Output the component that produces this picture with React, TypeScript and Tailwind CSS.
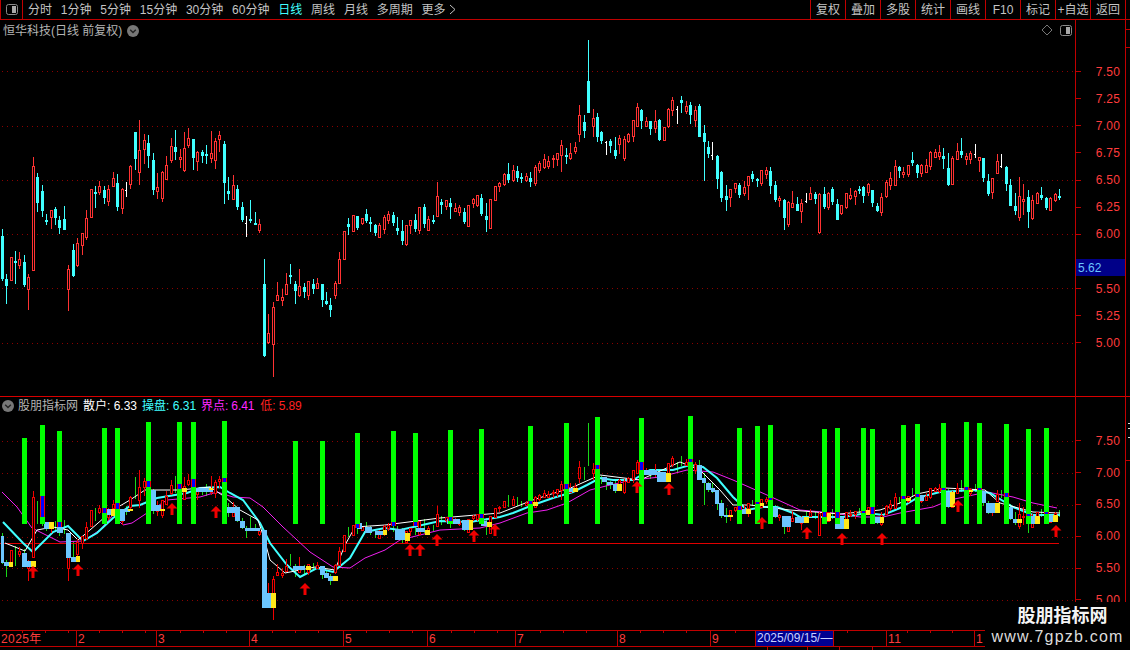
import React from "react";

type Candle = [number, "c" | "r" | "w", number, number, number, number];

const RED = "#ff3232";
const CYAN = "#40ffff";
const SKY = "#6cc6ff";
const YEL = "#ffe81a";
const font = "font-['Liberation_Sans','Noto_Sans_CJK_SC',sans-serif]";

// x, kind, body top, body bottom, high, low (page pixels of the upper pane)
const candles: Candle[] = [
  [2.5,"c",236,279,229,281],[6.5,"c",279,286,274,304],[11.5,"r",257,280,257,281],[15.5,"c",261,263,251,284],
  [19.5,"r",259,265,252,269],[24.5,"c",262,285,255,287],[28.5,"r",277,289,274,310],[33.5,"r",166,270,157,270],
  [37.5,"c",177,203,173,212],[42.5,"c",191,211,185,217],[46.5,"c",220,221,214,225],[51.5,"r",210,217,210,229],
  [55.5,"c",209,218,207,225],[59.5,"c",220,228,216,234],[64.5,"c",219,230,206,230],[68.5,"r",269,289,265,311],
  [73.5,"c",250,276,244,277],[77.5,"r",243,265,238,267],[82.5,"r",233,245,233,255],[86.5,"r",218,237,210,240],
  [91,"r",189,217,189,218],[95,"c",192,193,186,208],[99,"r",186,192,181,195],[104,"c",190,198,186,204],
  [108.5,"r",189,201,185,206],[113.5,"r",178,186,172,187],[117.5,"c",183,207,174,211],[122.5,"r",189,208,188,214],
  [126.5,"w",190,190,182,197],[130.5,"r",166,184,165,189],[135,"c",132,159,132,170],[139,"r",150,172,120,185],
  [144,"r",140,149,134,164],[148.5,"c",143,156,135,168],[153,"c",160,190,153,195],[157.5,"r",187,191,173,199],
  [162.5,"r",172,198,171,202],[166.5,"r",165,179,156,179],[171.5,"r",146,160,138,163],[175.5,"c",147,152,130,160],
  [180,"r",157,159,149,168],[184.5,"r",148,170,132,172],[188.5,"r",138,145,128,148],[193,"c",139,158,139,170],
  [197.5,"r",152,161,151,171],[202,"c",152,156,150,163],[206.5,"c",154,155,145,164],[211,"r",153,158,131,163],
  [215.5,"r",141,160,138,169],[219.5,"r",135,139,131,152],[224.5,"c",144,183,141,204],[228.5,"c",191,194,177,200],
  [233,"r",185,199,175,200],[237.5,"c",189,207,185,210],[242,"c",207,220,202,222],[246.5,"w",223,223,216,237],
  [250.5,"c",219,220,200,223],[255.5,"c",223,224,212,225],[259.5,"r",224,230,219,233],
  [264.5,"c",284,356,259,357],[268.5,"r",333,342,314,344],[273.5,"r",307,344,302,377],[277.5,"r",295,300,282,300],
  [282.5,"r",297,300,289,306],[286.5,"r",284,294,273,294],[290.5,"c",275,277,264,284],[295.5,"c",284,291,281,304],
  [299.5,"r",286,295,269,297],[304.5,"c",287,292,283,298],[308.5,"r",281,295,281,300],[313.5,"c",284,289,279,294],
  [317.5,"r",283,288,278,288],[322.5,"c",284,300,284,307],[326.5,"c",301,304,292,305],[330.5,"c",305,310,298,317],
  [335.5,"r",283,295,281,299],[339.5,"r",259,283,252,283],[344.5,"r",231,259,231,259],[348.5,"c",224,227,218,235],
  [353.5,"r",215,231,215,231],[357.5,"c",216,228,216,230],[362.5,"r",218,223,218,225],[366.5,"c",214,221,209,223],
  [370.5,"c",222,224,217,232],[375.5,"c",225,233,224,236],[379.5,"r",225,237,223,237],[384.5,"r",217,229,215,234],
  [388.5,"r",214,220,211,224],[393.5,"c",215,223,212,226],[397.5,"c",228,231,217,235],[402.5,"c",231,241,220,245],
  [406.5,"r",225,244,225,246],[410.5,"r",220,225,220,234],[415.5,"c",220,229,214,232],[419.5,"r",207,230,207,234],
  [424.5,"c",207,224,204,228],[428.5,"r",219,230,216,230],[433.5,"c",220,222,215,224],[437.5,"r",196,216,182,216],
  [441.5,"c",202,205,199,214],[446.5,"r",200,206,200,210],[450.5,"c",203,207,198,219],[455.5,"r",208,211,203,211],
  [459.5,"r",207,212,205,216],[464.5,"c",212,222,208,224],[468.5,"r",205,226,205,226],[473.5,"r",199,203,198,208],
  [477.5,"r",195,205,195,207],[481.5,"c",198,214,194,216],[486.5,"c",216,220,203,232],[490.5,"r",199,228,199,228],
  [495.5,"r",186,200,186,200],[499.5,"r",183,186,182,192],[504.5,"r",174,184,173,186],[508.5,"c",174,180,163,183],
  [513.5,"r",170,180,165,182],[517.5,"c",171,178,166,182],[521.5,"c",177,178,173,183],[526.5,"r",176,180,173,182],
  [530.5,"c",178,182,172,187],[535.5,"r",167,183,165,186],[539.5,"r",163,170,161,173],[544.5,"r",159,167,154,169],
  [548.5,"r",161,166,156,169],[553.5,"r",158,159,155,168],[557.5,"r",153,159,153,166],[561.5,"r",145,155,140,172],
  [566.5,"c",155,157,148,164],[570.5,"r",153,158,143,160],[575.5,"r",147,151,142,154],[579.5,"r",115,134,105,142],
  [584.5,"c",122,131,115,138],[588.5,"c",81,113,40,113],[593.5,"r",118,126,109,137],[597.5,"c",117,137,113,142],
  [601.5,"c",132,141,131,144],[606.5,"w",142,142,141,155],[610.5,"c",141,146,139,153],[615.5,"c",150,156,137,159],
  [619.5,"r",138,144,135,154],[624.5,"r",139,158,136,161],[628.5,"r",134,141,133,143],[633.5,"r",120,136,120,142],
  [637.5,"r",107,126,103,126],[641.5,"c",110,121,109,129],[646.5,"r",121,126,117,126],[650.5,"c",121,129,121,135],
  [655.5,"r",121,128,110,133],[659.5,"c",120,140,119,141],[664.5,"r",127,140,127,140],[668.5,"r",109,126,108,128],
  [672.5,"r",100,110,97,116],[677.5,"w",109,109,106,124],[681.5,"c",100,103,96,113],[686.5,"r",106,111,101,114],
  [690.5,"c",105,115,102,124],[695.5,"r",110,120,106,127],[699.5,"c",106,137,104,137],[704.5,"c",133,142,125,181],
  [708.5,"c",147,154,141,158],[712.5,"w",155,155,142,160],[717.5,"c",156,179,155,189],[721.5,"c",172,198,171,202],
  [726.5,"c",196,200,185,211],[730.5,"r",189,197,189,207],[735.5,"r",183,188,183,193],[739.5,"c",185,195,183,198],
  [744.5,"r",187,193,181,196],[748.5,"r",176,185,176,200],[752.5,"c",174,179,171,182],[757.5,"c",179,181,178,187],
  [761.5,"r",170,183,170,186],[766.5,"r",170,174,167,179],[770.5,"c",171,186,167,194],[775.5,"c",185,200,181,202],
  [779.5,"r",198,200,196,207],[784.5,"c",200,218,199,230],[788.5,"r",202,224,201,227],[792.5,"r",203,207,191,208],
  [797.5,"c",204,211,197,211],[801.5,"r",203,211,199,223],[806.5,"w",201,201,193,203],[810.5,"r",193,199,187,200],
  [815.5,"c",194,199,192,204],[819.5,"r",194,232,193,234],[824.5,"c",194,207,187,209],[828.5,"r",193,207,192,210],
  [832.5,"c",189,202,187,205],[837.5,"c",204,220,199,220],[841.5,"r",205,213,205,215],[846.5,"r",193,207,193,209],
  [850.5,"r",195,198,188,200],[855.5,"r",191,196,190,205],[859.5,"c",189,191,186,194],[863.5,"c",187,196,186,203],
  [868.5,"r",184,192,183,196],[872.5,"c",190,203,190,207],[877.5,"c",206,211,203,212],[881.5,"r",197,212,193,216],
  [886.5,"r",182,196,180,198],[890.5,"r",178,185,172,190],[895.5,"r",166,185,160,185],[899.5,"c",167,171,166,178],
  [903.5,"r",172,174,167,178],[908.5,"r",165,174,165,177],[912.5,"c",160,163,152,166],[917.5,"c",165,173,164,178],
  [921.5,"r",165,173,164,177],[926.5,"r",165,172,159,172],[930.5,"r",152,166,151,170],[935.5,"r",152,157,149,158],
  [939.5,"r",152,156,145,160],[943.5,"c",156,159,148,169],[948.5,"c",168,185,153,186],[952.5,"r",158,184,156,184],
  [957.5,"r",151,159,143,159],[961.5,"c",151,155,138,158],[966.5,"r",156,159,153,165],[970.5,"r",153,159,151,164],
  [975.5,"w",154,154,144,158],[979.5,"r",157,160,157,172],[983.5,"c",158,178,158,182],[988.5,"c",181,194,174,196],
  [992.5,"r",178,192,178,199],[997.5,"r",161,173,154,173],[1001.5,"w",166,166,154,168],[1006.5,"c",167,184,166,191],
  [1010.5,"c",185,206,179,206],[1015.5,"c",206,211,193,215],[1019.5,"r",196,217,177,221],[1023.5,"r",199,201,184,215],
  [1028.5,"c",197,212,190,228],[1032.5,"r",200,218,195,220],[1037.5,"r",193,203,192,203],[1041.5,"c",195,198,187,200],
  [1046.5,"c",198,208,197,210],[1050.5,"r",198,210,197,211],[1055.5,"r",194,200,193,202],[1059.5,"c",196,198,189,200],
];

// same candles on the lower pane's price scale
const low = (y: number) => 441.5 + (y - 71.5) * 0.5838;

const bars: [number, number][] = [
  [22,438],[40,425],[57,431],[102,428],[115,428],[146,422],[177,422],[191,422],[222,421],[293,441],[320,441],
  [355,433],[391,431],[413,433],[448,430],[479,429],[528,426],[564,423],[595,417],[639,418],[688,416],[737,428],
  [755,426],[768,425],[822,429],[835,428],[861,428],[870,429],[901,425],[915,424],[941,423],[964,422],[977,423],
  [1004,424],[1026,429],[1044,428],
];

const blues: [number, number, number][] = [
  [40,496,517],[57,522,527],[102,508,513],[115,503,509],[146,481,487],[177,484,489],[191,479,487],[222,478,482],
  [355,524,528],[391,522,526],[413,522,526],[448,517,521],[479,514,518],[528,501,504],[564,484,489],[595,465,469],
  [639,462,470],[688,459,462],[737,506,510],[755,502,504],[768,498,500],[822,512,517],[835,512,518],[861,511,513],
  [870,507,514],[901,496,499],[915,494,497],[941,488,490],[964,487,490],[977,488,490],[1004,493,497],[1026,514,516],
  [1044,512,514],
];

const skyBlocks: [number, number, number, number][] = [
  [1,4,536,563],[4,10,562,566],[22,27,553,567],[27,32,561,567],[44,50,522,529],[57,63,527,533],[66,71,533,558],
  [71,76,557,562],[107,113,509,515],[116,125,509,521],[125,130,509,512],[151,156,490,511],[156,161,505,511],
  [196,213,488,492],[227,240,507,513],[235,240,507,521],[240,245,521,528],[245,260,528,531],[262,267,530,608],
  [267,272,593,608],[293,305,566,570],[320,325,566,575],[324,329,573,578],[328,333,576,581],[357,362,523,529],
  [365,372,527,533],[375,383,531,535],[395,405,529,540],[416,425,528,532],[447,460,519,524],[462,470,520,530],
  [481,487,521,526],[569,573,488,492],[602,607,477,482],[607,613,482,485],[613,617,484,491],[644,657,470,475],
  [657,666,472,482],[697,702,465,480],[702,706,478,483],[706,711,483,490],[711,715,488,492],[715,719,490,504],
  [719,724,503,516],[724,728,515,517],[742,746,509,514],[773,778,507,517],[782,791,516,527],[795,804,517,523],
  [835,844,517,529],[875,880,517,523],[920,924,495,501],[946,950,492,507],[982,986,491,503],[986,995,503,513],
  [1009,1013,507,519],[1013,1017,519,523],[1031,1035,516,524],[1049,1053,515,522],
];

const yellowBlocks: [number, number, number, number][] = [
  [9,13,562,567],[31,36,561,567],[49,54,522,529],[76,80,556,562],[111,116,509,516],[128,133,509,511],[160,165,509,511],
  [182,187,488,492],[209,213,488,490],[271,276,593,608],[306,311,566,570],[333,338,576,581],[383,387,530,535],
  [405,410,533,541],[425,430,530,535],[469,473,520,530],[487,492,522,527],[533,538,502,506],[573,578,488,492],
  [617,622,484,491],[666,671,473,482],[728,733,515,517],[746,751,509,514],[760,764,503,506],[804,809,517,523],
  [827,831,513,521],[844,849,519,529],[866,870,510,515],[880,884,517,523],[906,911,498,501],[950,955,492,507],
  [969,973,490,492],[995,1000,503,513],[1017,1022,519,523],[1035,1040,516,524],[1053,1058,515,522],
];

const arrows: [number, number][] = [
  [33,566],[78,564],[172,503],[216,506],[305,583],[410,544],[420,544],[437,534],[474,530],[495,524],[637,481],
  [669,483],[762,517],[807,527],[842,533],[882,533],[958,500],[1056,525],
];

// week marks along the top of the date axis
const dateTicks = [22, 45, 68, 99, 122, 145, 180, 203, 226, 272, 295, 318, 366, 389, 412, 451, 474, 497, 540, 563, 586, 640, 663, 686, 735, 847, 907, 930, 952, 1000];

const cyanLine = "3,522 23,543 33,552 37,548 53,532 68,526 83,541 97,533 113,518 130,506 140,505 157,498 187,493 200,488 220,487 230,493 243,500 260,523 270,543 287,565 300,577 317,568 333,572 350,558 365,532 385,528 400,530 440,521 470,522 500,517 513,513 533,505 553,498 573,492 587,485 600,478 613,480 633,480 650,470 673,470 690,465 703,467 717,478 733,497 747,510 763,507 777,507 793,513 800,517 843,517 867,513 883,515 900,508 917,498 940,492 973,490 990,493 1013,507 1033,515 1060,515";
const magentaLine = "2,492 17,507 32,528 60,542 83,541 100,530 113,515 123,525 132,523 147,513 167,500 200,497 217,492 233,497 250,498 263,507 283,527 310,552 333,567 350,568 365,558 385,550 400,540 440,530 480,528 500,523 527,513 547,510 567,503 590,490 610,485 633,480 660,477 687,470 713,472 733,480 767,495 800,510 833,513 860,517 883,517 900,513 933,507 950,500 987,492 1013,497 1033,503 1057,508";
const whiteLine = "5,543 25,551 37,530 53,527 68,530 78,540 90,530 113,510 130,500 145,490 180,490 210,487 225,497 240,510 258,520 264,538 270,560 285,573 300,570 315,567 335,570 345,545 355,527 385,525 440,518 500,513 533,500 573,487 600,475 640,480 680,462 700,470 720,490 733,505 750,505 790,510 840,514 880,510 900,503 917,494 945,488 985,490 1000,503 1033,512 1060,513";

function CandleMark({ c, y, wick, up }: { c: Candle; y: (v: number) => number; wick: string; up: string }) {
  const [x, kind, top, bot, hi, lo] = c;
  const bx = Math.round(x - 1.5);
  const t = Math.round(y(top));
  const b = Math.round(y(bot));
  const h = Math.round(y(hi));
  const l = Math.round(y(lo));
  if (kind === "r") {
    return (
      <g fill={up}>
        <rect x={bx + 1} y={h} width={1} height={Math.max(l - h, 1)} />
        <rect x={bx + 0.5} y={t + 0.5} width={2} height={Math.max(b - t, 1)} fill="#000" stroke={up} />
      </g>
    );
  }
  return (
    <g fill={kind === "w" ? "#fff" : wick}>
      <rect x={bx + 1} y={h} width={1} height={Math.max(l - h, 1)} />
      {kind === "w" ? <rect x={bx} y={t} width={1} height={1} /> : <rect x={bx} y={t} width={3} height={Math.max(b - t, 2)} />}
    </g>
  );
}

function UpArrow({ x, y }: { x: number; y: number }) {
  return <path d={`M${x} ${y}L${x + 5.5} ${y + 5.5}H${x + 1.5}V${y + 12}H${x - 1.5}V${y + 5.5}H${x - 5.5}Z`} fill="#f00000" />;
}

function Toggle() {
  return (
    <svg width="12" height="11" viewBox="0 0 12 11">
      <rect x="0.5" y="0.5" width="11" height="10" rx="2" fill="none" stroke="#8a8a8a" />
      <rect x="6" y="2" width="4" height="7" fill="#a8a8a8" />
    </svg>
  );
}

function Chevron() {
  return (
    <svg width="12" height="12" viewBox="0 0 12 12">
      <circle cx="6" cy="6" r="6" fill="#777" />
      <path d="M3.2 4.8L6 7.6L8.8 4.8" fill="none" stroke="#222" strokeWidth="1.4" />
    </svg>
  );
}

function Grid({ ys }: { ys: number[] }) {
  return (
    <>
      {ys.map((y) => (
        <line key={y} x1="2" x2="1075" y1={y + 0.5} y2={y + 0.5} stroke="#8c0000" strokeDasharray="1 4" />
      ))}
    </>
  );
}

function UpperChart() {
  return (
    <svg className="block" width="1075" height="376" viewBox="0 20 1075 376" shapeRendering="crispEdges">
      <Grid ys={[71, 126, 180, 234, 288, 343]} />
      {candles.map((c) => (
        <CandleMark key={c[0]} c={c} y={(v) => v} wick={CYAN} up={RED} />
      ))}
    </svg>
  );
}

function LowerChart() {
  const red = candles.filter((c) => c[1] === "r");
  const rest = candles.filter((c) => c[1] !== "r");
  return (
    <svg className="block" width="1075" height="233" viewBox="0 397 1075 233">
      <g shapeRendering="crispEdges">
        <Grid ys={[441, 473, 505, 537, 568, 600]} />
        {rest.map((c) => (
          <rect key={c[0]} x={Math.round(c[0] - 0.5)} y={low(c[4])} width={1} height={low(c[5]) - low(c[4])} fill="#18d818" />
        ))}
      </g>
      <line x1="0" x2="1059" y1="543.5" y2="543.5" stroke="#e00000" />
      <polyline points={magentaLine} fill="none" stroke="#f020f0" strokeWidth="1" />
      <polyline points={cyanLine} fill="none" stroke={CYAN} strokeWidth="2" />
      <polyline points={whiteLine} fill="none" stroke="#fff" strokeWidth="1" />
      <g shapeRendering="crispEdges">
        {red.map((c) => (
          <CandleMark key={c[0]} c={c} y={low} wick={RED} up="#f00000" />
        ))}
        {skyBlocks.map(([a, b, t, u]) => (
          <rect key={`${a}-${t}`} x={a} y={t} width={b - a} height={u - t} fill={SKY} />
        ))}
        {yellowBlocks.map(([a, b, t, u]) => (
          <rect key={`${a}-${t}`} x={a} y={t} width={b - a} height={u - t} fill={YEL} />
        ))}
        {bars.map(([x, top]) => (
          <rect key={x} x={x} y={top} width={5} height={524 - top} fill="#00ff00" />
        ))}
        {blues.map(([x, t, u]) => (
          <g key={x}>
            <rect x={x} y={t} width={5} height={u - t} fill="#f00000" />
            <rect x={x + 1} y={t} width={3} height={u - t} fill="#0000ff" />
          </g>
        ))}
      </g>
      {arrows.map(([x, y]) => (
        <UpArrow key={x} x={x} y={y} />
      ))}
    </svg>
  );
}

function AxisRow({ label, h }: { label: string; h: string }) {
  return (
    <div className={`flex items-center ${h}`}>
      <span className="h-px w-[5px] bg-[#c00000]" />
      {label && <span className="ml-auto mr-[5px] text-[12px] leading-none tracking-[0.2px] text-[#ff3c3c]">{label}</span>}
    </div>
  );
}

const periods = ["分时", "1分钟", "5分钟", "15分钟", "30分钟", "60分钟", "日线", "周线", "月线", "多周期"];
const tools = ["复权", "叠加", "多股", "统计", "画线", "F10", "标记", "+自选", "返回"];
const months: [string, string][] = [
  ["2025年", "w-[76px]"], ["2", "w-[80px]"], ["3", "w-[93px]"], ["4", "w-[94px]"], ["5", "w-[84px]"], ["6", "w-[88px]"],
  ["7", "w-[102px]"], ["8", "w-[93px]"], ["9", "w-[176px]"], ["11", "w-[88px]"], ["1", "flex-1"],
];

export default function App() {
  return (
    <div className={`relative flex h-[650px] w-[1130px] flex-col overflow-hidden bg-black ${font}`}>
      {/* toolbar */}
      <div className="flex h-[20px] shrink-0 items-center border-b border-[#c00000] text-[12px] text-[#c4c4c4]">
        <div className="flex h-full w-[23px] items-center justify-center border-x border-[#c00000]">
          <Toggle />
        </div>
        <div className="ml-[5px] flex items-center gap-[8.8px]">
          {periods.map((p) => (
            <span key={p} className={p === "日线" ? "text-[#40ffff]" : ""}>{p}</span>
          ))}
          <span className="flex items-center gap-[3px]">
            更多
            <svg width="7" height="11" viewBox="0 0 7 11">
              <path d="M1 1L6 5.5L1 10" fill="none" stroke="#c4c4c4" />
            </svg>
          </span>
        </div>
        <div className="ml-auto flex h-full">
          {tools.map((t) => (
            <div key={t} className="flex h-full w-[35px] items-center justify-center border-l border-[#c00000]">{t}</div>
          ))}
          <div className="w-[5px] border-l border-[#c00000]" />
        </div>
      </div>

      <div className="flex h-[610px] shrink-0">
        <div className="flex w-[1075px] flex-col">
          {/* upper pane */}
          <div className="relative h-[376px] border-b-0">
            <UpperChart />
            <div className="absolute left-[3px] top-[2px] flex items-center gap-[5px] text-[12px] text-[#b4b4b4]">
              <span>恒华科技(日线 前复权)</span>
              <Chevron />
            </div>
            <div className="absolute right-[3px] top-[4px] flex items-center gap-[7px]">
              <svg width="12" height="12" viewBox="0 0 12 12">
                <path d="M6 1L11 6L6 11L1 6Z" fill="none" stroke="#777" />
              </svg>
              <Toggle />
            </div>
          </div>
          <div className="h-px w-[1130px] shrink-0 bg-[#d80000]" />
          {/* lower pane */}
          <div className="relative flex-1">
            <LowerChart />
            <div className="absolute left-[2px] top-0 flex items-center text-[12px]">
              <Chevron />
              <span className="ml-[4px] text-[#b4b4b4]">股朋指标网</span>
              <span className="ml-[5px] text-white">散户: 6.33</span>
              <span className="ml-[5px] text-[#40ffff]">操盘: 6.31</span>
              <span className="ml-[5px] tracking-[-0.1px] text-[#ff28ff]">界点: 6.41</span>
              <span className="ml-[6px] tracking-[-0.1px] text-[#ff2020]">低: 5.89</span>
            </div>
          </div>
        </div>

        {/* price axes */}
        <div className="relative w-[51px] shrink-0 border-x border-[#c00000]">
          <div className="h-[376px] pt-[38px]">
            {["7.50", "7.25", "7.00", "6.75", "6.50", "6.25", "6.00", "", "5.50", "5.25", "5.00"].map((v, i) => (
              <AxisRow key={i} label={v} h="h-[27.15px]" />
            ))}
          </div>
          <div className="h-px" />
          <div className="pt-[28px]">
            {["7.50", "7.00", "6.50", "6.00", "5.50", "5.00"].map((v) => (
              <AxisRow key={v} label={v} h="h-[31.8px]" />
            ))}
          </div>
          <div className="absolute left-0 top-[239px] flex h-[17px] w-full items-center bg-[#000088] pl-[2px] text-[12px] text-[#6cc6ff]">5.62</div>
        </div>
        <svg className="shrink-0" width="4" height="610" viewBox="0 0 4 610" shapeRendering="crispEdges">
          <rect x="0" y="9" width="4" height="1" fill="#c00000" />
          <rect x="0" y="27" width="4" height="1" fill="#c00000" />
          <rect x="2" y="403" width="2" height="1" fill="#ddd" />
          <rect x="2" y="408" width="2" height="1" fill="#ddd" />
          <rect x="2" y="417" width="2" height="1" fill="#ddd" />
          <rect x="0" y="440" width="4" height="1" fill="#c00000" />
        </svg>
      </div>

      {/* date axis */}
      <div className="relative flex h-[17px] shrink-0 border-y border-[#c00000] text-[12px] leading-[16px] tracking-[0.4px] text-[#ff3c3c]">
        {months.map(([m, w], i) => (
          <div key={m + i} className={`${w} pl-[1px] ${i > 0 ? "border-l border-[#c00000]" : ""}`}>{m}</div>
        ))}
        <svg className="absolute left-0 top-0" width="1130" height="3" viewBox="0 0 1130 3" shapeRendering="crispEdges">
          {dateTicks.map((x) => (
            <rect key={x} x={x} y={0} width={1} height={2} fill="#c00000" />
          ))}
        </svg>
        <div className="absolute left-[755px] top-0 h-[15px] w-[79px] border-x border-[#c00000] bg-[#000090] pl-[1px] leading-[15px] tracking-normal text-[#c8d0ff]">
          2025/09/15/—
        </div>
      </div>

      {/* tab strip, cut off by the window edge */}
      <div className="flex flex-1">
        <div className="w-[767px]" />
        <div className="w-[40px] border-l border-[#c00000]" />
        <div className="w-[32px] border-l border-[#c00000]" />
        <div className="w-[33px] border-l border-[#c00000]" />
        <div className="border-l border-[#c00000]" />
      </div>

      {/* site watermark */}
      <div className="absolute bottom-0 right-0 flex h-[48px] w-[145px] flex-col items-center bg-black pt-[3px] text-[#f4f4f4]">
        <span className="ml-[10px] text-[18px] font-bold leading-[22px]">股朋指标网</span>
        <span className="text-[16px] leading-[20px] tracking-[1.2px] text-[#dcdcdc]">www.7gpzb.com</span>
      </div>
    </div>
  );
}
